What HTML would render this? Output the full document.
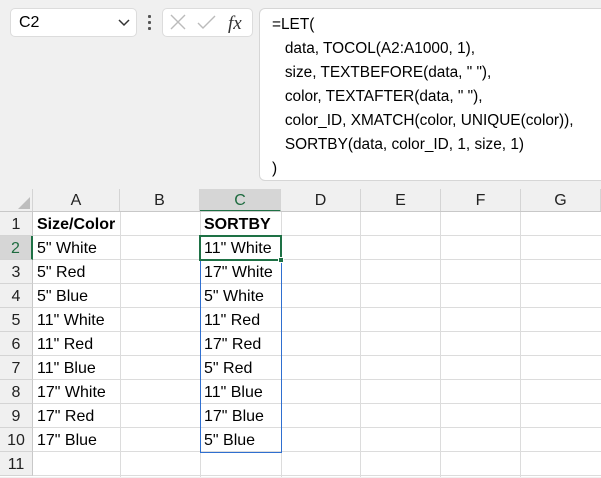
<!DOCTYPE html>
<html><head><style>
*{margin:0;padding:0;box-sizing:border-box}
body{width:601px;height:477px;background:#f0f0f0;font-family:"Liberation Sans",sans-serif;position:relative;overflow:hidden;color:#000}
.abs{position:absolute}
#name{left:10px;top:8px;width:127px;height:29px;background:#fff;border:1px solid #dcdcdc;border-radius:5px;font-size:16px;padding:5px 0 0 8px}
#fxbox{left:162px;top:8px;width:91px;height:29px;background:#fff;border:1px solid #dcdcdc;border-radius:5px}
#formula{left:259px;top:8px;width:360px;height:173px;background:#fff;border:1px solid #d6d6d6;border-radius:6px;font-size:15.4px;line-height:24px;padding:4px 0 0 12px;white-space:pre}
#grid{left:0;top:189px;width:601px;height:288px;background:#fff}
.ch{position:absolute;top:189px;height:23px;background:#f0f0f0;border-right:1px solid #d4d4d4;font-size:16px;text-align:center;line-height:24px;color:#222}
.rh{position:absolute;left:0;width:33px;height:24px;background:#f0f0f0;border-bottom:1px solid #d4d4d4;border-right:1px solid #c8c8c8;font-size:16px;text-align:center;line-height:26px;color:#222}
.hl{position:absolute;left:33px;width:568px;height:1px;background:#dcdcdc}
.vl{position:absolute;top:212px;width:1px;height:265px;background:#dcdcdc}
.c{position:absolute;font-size:16px;line-height:26px;white-space:pre}
</style></head><body>
<div id="name" class="abs">C2</div>
<svg class="abs" style="left:117px;top:17px" width="14" height="10"><path d="M2 3 L7 8 L12 3" stroke="#333" stroke-width="1.5" fill="none"/></svg>
<div class="abs" style="left:148px;top:15px;width:3px;height:3px;background:#555;border-radius:1px"></div>
<div class="abs" style="left:148px;top:21px;width:3px;height:3px;background:#555;border-radius:1px"></div>
<div class="abs" style="left:148px;top:27px;width:3px;height:3px;background:#555;border-radius:1px"></div>
<div id="fxbox" class="abs"></div>
<svg class="abs" style="left:162px;top:8px" width="91" height="29"><path d="M9 7 L23 21 M23 7 L9 21" stroke="#bbb" stroke-width="1.4" fill="none"/><path d="M36 15 L41 20 L53 8" stroke="#bbb" stroke-width="1.4" fill="none"/><text x="66" y="21" font-family="Liberation Serif" font-style="italic" font-size="19" fill="#333">fx</text></svg>
<div id="formula" class="abs">=LET(
   data, TOCOL(A2:A1000, 1),
   size, TEXTBEFORE(data, " "),
   color, TEXTAFTER(data, " "),
   color_ID, XMATCH(color, UNIQUE(color)),
   SORTBY(data, color_ID, 1, size, 1)
)</div>
<div id="grid" class="abs"></div>
<div class="abs" style="left:0;top:189px;width:33px;height:23px;background:#f0f0f0;border-right:1px solid #d4d4d4;border-bottom:1px solid #c8c8c8"></div>
<svg class="abs" style="left:17px;top:196px" width="14" height="14"><path d="M13 1 L13 13 L1 13 Z" fill="#bdbdbd"/></svg>
<div class="ch" style="left:33px;width:87px">A</div>
<div class="ch" style="left:120px;width:80px">B</div>
<div class="ch" style="left:200px;width:81px;background:#d6d6d6;color:#1e6b3f;border-bottom:2px solid #1e7145">C</div>
<div class="ch" style="left:281px;width:80px">D</div>
<div class="ch" style="left:361px;width:80px">E</div>
<div class="ch" style="left:441px;width:80px">F</div>
<div class="ch" style="left:521px;width:80px">G</div>
<div class="abs" style="left:0;top:211px;width:601px;height:1px;background:#c8c8c8"></div>
<div class="rh" style="top:212px">1</div>
<div class="rh" style="top:236px;background:#d6d6d6;color:#1e6b3f;border-right:2px solid #1e7145">2</div>
<div class="rh" style="top:260px">3</div>
<div class="rh" style="top:284px">4</div>
<div class="rh" style="top:308px">5</div>
<div class="rh" style="top:332px">6</div>
<div class="rh" style="top:356px">7</div>
<div class="rh" style="top:380px">8</div>
<div class="rh" style="top:404px">9</div>
<div class="rh" style="top:428px">10</div>
<div class="rh" style="top:452px">11</div>
<div class="hl" style="top:235px"></div><div class="hl" style="top:259px"></div><div class="hl" style="top:283px"></div><div class="hl" style="top:307px"></div><div class="hl" style="top:331px"></div><div class="hl" style="top:355px"></div><div class="hl" style="top:379px"></div><div class="hl" style="top:403px"></div><div class="hl" style="top:427px"></div><div class="hl" style="top:451px"></div><div class="hl" style="top:475px"></div>
<div class="vl" style="left:120px"></div><div class="vl" style="left:200px"></div><div class="vl" style="left:281px"></div><div class="vl" style="left:360px"></div><div class="vl" style="left:440px"></div><div class="vl" style="left:520px"></div>
<div class="c" style="left:37px;top:212px;font-weight:bold">Size/Color</div>
<div class="c" style="left:37px;top:236px">5" White</div>
<div class="c" style="left:37px;top:260px">5" Red</div>
<div class="c" style="left:37px;top:284px">5" Blue</div>
<div class="c" style="left:37px;top:308px">11" White</div>
<div class="c" style="left:37px;top:332px">11" Red</div>
<div class="c" style="left:37px;top:356px">11" Blue</div>
<div class="c" style="left:37px;top:380px">17" White</div>
<div class="c" style="left:37px;top:404px">17" Red</div>
<div class="c" style="left:37px;top:428px">17" Blue</div>
<div class="abs" style="left:200px;top:236px;width:82px;height:217px;border:1px solid #2f6fd0"></div>
<div class="c" style="left:204px;top:212px;font-weight:bold">SORTBY</div>
<div class="c" style="left:204px;top:236px">11" White</div>
<div class="c" style="left:204px;top:260px">17" White</div>
<div class="c" style="left:204px;top:284px">5" White</div>
<div class="c" style="left:204px;top:308px">11" Red</div>
<div class="c" style="left:204px;top:332px">17" Red</div>
<div class="c" style="left:204px;top:356px">5" Red</div>
<div class="c" style="left:204px;top:380px">11" Blue</div>
<div class="c" style="left:204px;top:404px">17" Blue</div>
<div class="c" style="left:204px;top:428px">5" Blue</div>
<div class="abs" style="left:199px;top:235px;width:83px;height:26px;border:2px solid #1e7145"></div>
<div class="abs" style="left:278px;top:257px;width:6px;height:6px;background:#1e7145;border:1px solid #fff"></div>
</body></html>
